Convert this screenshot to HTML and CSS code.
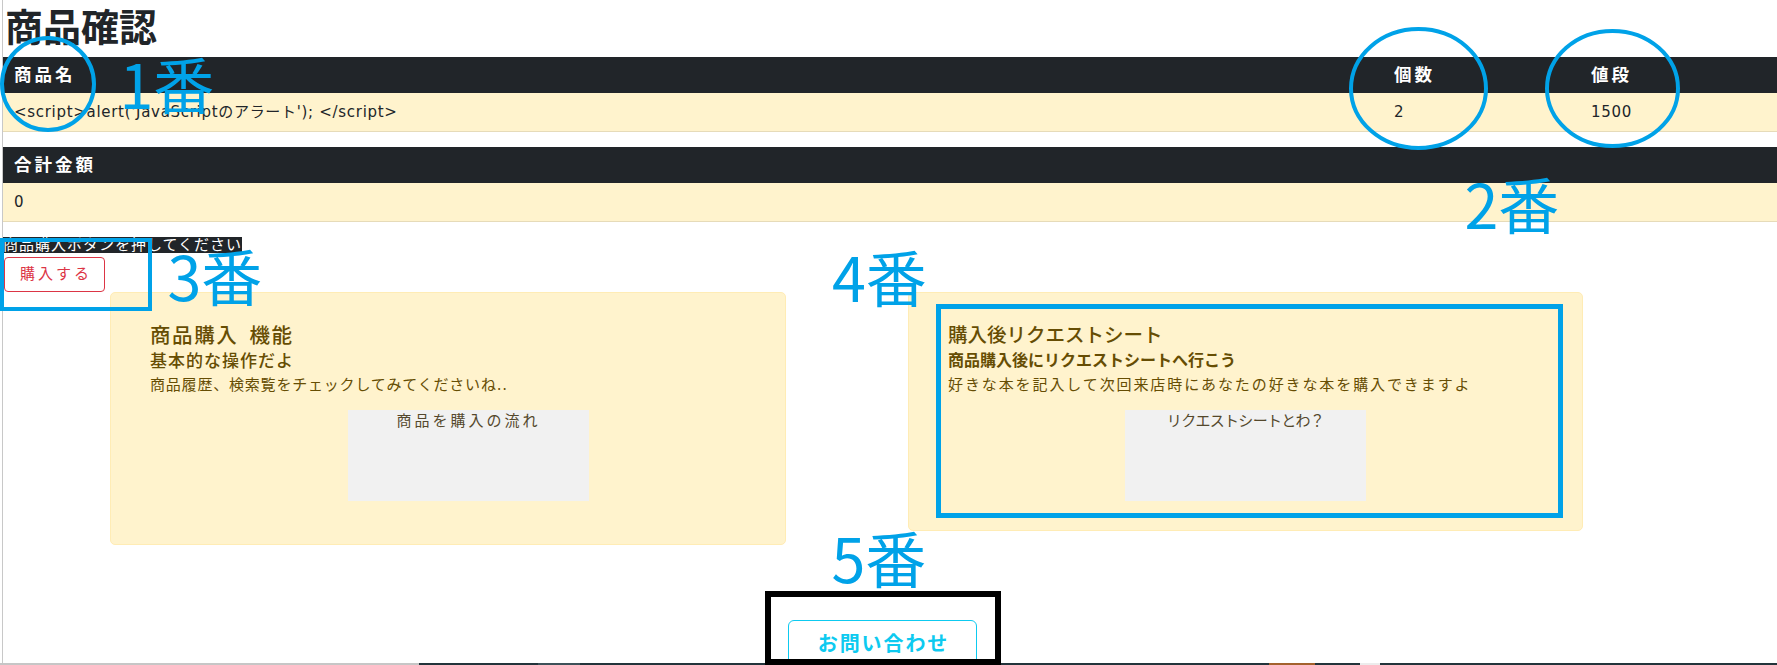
FILE: index.html
```html
<!DOCTYPE html>
<html lang="ja">
<head>
<meta charset="utf-8">
<title>商品確認</title>
<link rel="stylesheet" href="styles.css">
</head>
<body>
<div class="page">
  <h1 class="title">商品確認</h1>

  <table class="tbl">
    <colgroup><col class="col-name"><col class="col-qty"><col class="col-price"></colgroup>
    <thead>
      <tr><th>商品名</th><th>個数</th><th>値段</th></tr>
    </thead>
    <tbody>
      <tr><td>&lt;script&gt;alert('JavaScriptのアラート'); &lt;/script&gt;</td><td>2</td><td>1500</td></tr>
    </tbody>
  </table>

  <table class="tbl">
    <thead><tr><th>合計金額</th></tr></thead>
    <tbody><tr><td>0</td></tr></tbody>
  </table>

  <div class="notice"><span class="notice-text">商品購入ボタンを押してください</span></div>
  <button class="btn-buy" type="button">購入する</button>

  <div class="cards">
    <section class="card card-1">
      <h5 class="card-title card-title-wide">商品購入 機能</h5>
      <h6 class="card-sub card-sub-1">基本的な操作だよ</h6>
      <p class="card-text card-text-1">商品履歴、検索覧をチェックしてみてくださいね..</p>
      <div class="figure figure-1">商品を購入の流れ</div>
    </section>
    <section class="card card-2">
      <h5 class="card-title">購入後リクエストシート</h5>
      <h6 class="card-sub">商品購入後にリクエストシートへ行こう</h6>
      <p class="card-text card-text-2">好きな本を記入して次回来店時にあなたの好きな本を購入できますよ</p>
      <div class="figure figure-2">リクエストシートとわ？</div>
    </section>
  </div>

  <div class="contact"><button class="btn-contact" type="button">お問い合わせ</button></div>
</div>

<div class="taskbar">
  <i class="tb tb-light" style="width:419px"></i>
  <i class="tb" style="width:119px"></i>
  <i class="tb tb-mid" style="width:42px"></i>
  <i class="tb" style="width:689px"></i>
  <i class="tb tb-orange" style="width:46px"></i>
  <i class="tb" style="width:45px"></i>
  <i class="tb tb-white" style="width:20px"></i>
  <i class="tb" style="width:397px"></i>
</div>

<svg class="marks" width="1777" height="665" viewBox="0 0 1777 665">
  <g class="mark-lines">
    <ellipse cx="48" cy="84" rx="46" ry="46"/>
    <ellipse cx="1418.5" cy="88.5" rx="67.5" ry="59.5"/>
    <ellipse cx="1612.5" cy="88.5" rx="65.5" ry="57.5"/>
    <rect x="2" y="240" width="148" height="69"/>
    <rect class="thick" x="938.5" y="306.5" width="622" height="209"/>
  </g>
  <rect class="black-box" x="768" y="594" width="230" height="68"/>
  <g class="mark-labels">
    <text x="119.5" y="109">1番</text>
    <text x="1464.5" y="229">2番</text>
    <text x="167.5" y="301">3番</text>
    <text x="832" y="302">4番</text>
    <text x="831.5" y="583">5番</text>
  </g>
</svg>
</body>
</html>
```

FILE: styles.css
```css
* { box-sizing: border-box; }

html, body {
  margin: 0;
  padding: 0;
  background: #ffffff;
}

body {
  position: relative;
  width: 1777px;
  height: 665px;
  overflow: hidden;
  font-family: "DejaVu Sans", "Noto Sans CJK JP", sans-serif;
  color: #212529;
}

.page {
  margin-left: 2px;
  width: 1775px;
  min-height: 665px;
  border-left: 1px solid #c8c8c8;
}

.title {
  margin: 0 0 10px 2px;
  padding-top: 9px;
  font-size: 38px;
  line-height: 38px;
  font-weight: 700;
  color: #212529;
}

/* tables */
.tbl {
  width: 1774px;
  table-layout: fixed;
  border-collapse: separate;
  border-spacing: 0;
  margin-bottom: 15px;
}
.col-name { width: 1380px; }
.col-qty { width: 197px; }
.col-price { width: 197px; }

.tbl th {
  box-sizing: content-box;
  height: 36px;
  padding: 0 11px;
  background: #212529;
  color: #ffffff;
  text-align: left;
  font-size: 17.5px;
  line-height: 17px;
  font-weight: 700;
  letter-spacing: 3px;
  white-space: nowrap;
}

.tbl td {
  box-sizing: content-box;
  height: 38px;
  padding: 0 11px;
  background: #fff3cd;
  border-bottom: 1px solid #e6dbb9;
  color: #212529;
  font-size: 15px;
  line-height: 15px;
  letter-spacing: 0.7px;
  white-space: nowrap;
}

/* notice + buy button */
.notice {
  display: flex;
  height: 16px;
  margin-bottom: 4px;
}
.notice-text {
  display: block;
  height: 16px;
  background: #212529;
  color: #ffffff;
  font-size: 15px;
  line-height: 16px;
  letter-spacing: 1px;
  white-space: nowrap;
}

.btn-buy {
  display: block;
  margin: 0 0 0 1px;
  width: 101px;
  height: 35px;
  padding: 0;
  background: #ffffff;
  border: 1px solid #dc3545;
  border-radius: 4px;
  color: #dc3545;
  font-family: "DejaVu Sans", "Noto Sans CJK JP", sans-serif;
  font-size: 15px;
  line-height: 15px;
  letter-spacing: 3px;
  text-indent: 3px;
}

/* cards */
.cards {
  display: flex;
  align-items: flex-start;
  gap: 122px;
  margin-left: 107px;
}

.card {
  background: #fff3cd;
  border: 1px solid #ffecb5;
  border-radius: 5px;
  padding: 33px 39px 0;
  color: #664d03;
}
.card-1 { width: 676px; height: 253px; }
.card-2 { width: 675px; height: 239px; }

.card-title {
  margin: 0 0 7px;
  font-size: 19.5px;
  line-height: 20px;
  font-weight: 500;
  white-space: nowrap;
}
.card-title-wide {
  font-size: 20.5px;
  letter-spacing: 1.6px;
  word-spacing: 3px;
}

.card-sub {
  margin: 0 0 9px;
  font-size: 16px;
  line-height: 16px;
  font-weight: 700;
  white-space: nowrap;
}
.card-sub-1 {
  font-size: 17px;
  line-height: 17px;
  letter-spacing: 1px;
  font-weight: 500;
  margin-bottom: 8px;
}

.card-text {
  margin: 0 0 17px;
  font-size: 15px;
  line-height: 15px;
  white-space: nowrap;
}
.card-text-1 { letter-spacing: 0.8px; }
.card-text-2 { letter-spacing: 1.9px; }

.figure {
  width: 241px;
  height: 91px;
  padding-top: 4px;
  background: #f1f1f1;
  text-align: center;
  font-size: 15px;
  line-height: 15px;
  color: #54482c;
  white-space: nowrap;
}
.figure-1 { margin-left: 198px; letter-spacing: 3px; }
.figure-2 { margin: 0 auto; letter-spacing: -0.7px; }

/* contact */
.contact {
  margin: 75px 0 0 785px;
}
.btn-contact {
  display: block;
  width: 189px;
  height: 48px;
  padding: 0;
  background: #ffffff;
  border: 1px solid #0dcaf0;
  border-radius: 6px;
  color: #0dcaf0;
  font-family: "DejaVu Sans", "Noto Sans CJK JP", sans-serif;
  font-size: 20px;
  line-height: 20px;
  font-weight: 700;
  letter-spacing: 1.9px;
  text-indent: 2px;
}

/* screen edge strip */
.taskbar {
  position: fixed;
  left: 0;
  bottom: 0;
  width: 1777px;
  height: 2px;
  display: flex;
  z-index: 5;
}
.tb {
  display: block;
  height: 2px;
  background: #23343b;
}
.tb-light { background: #c6c6c6; }
.tb-mid { background: #3d5159; }
.tb-orange { background: #a3622d; }
.tb-white { background: #ececec; }

/* annotations drawn over the screenshot */
.marks {
  position: absolute;
  left: 0;
  top: 0;
  z-index: 10;
  pointer-events: none;
}
.mark-lines ellipse,
.mark-lines rect {
  fill: none;
  stroke: #00a2e8;
  stroke-width: 4;
}
.mark-lines rect.thick { stroke-width: 5; }
.black-box {
  fill: none;
  stroke: #000000;
  stroke-width: 6;
}
.mark-labels text {
  font-family: "Noto Sans CJK JP", sans-serif;
  font-size: 61px;
  font-weight: 400;
  fill: #00a2e8;
}
```
